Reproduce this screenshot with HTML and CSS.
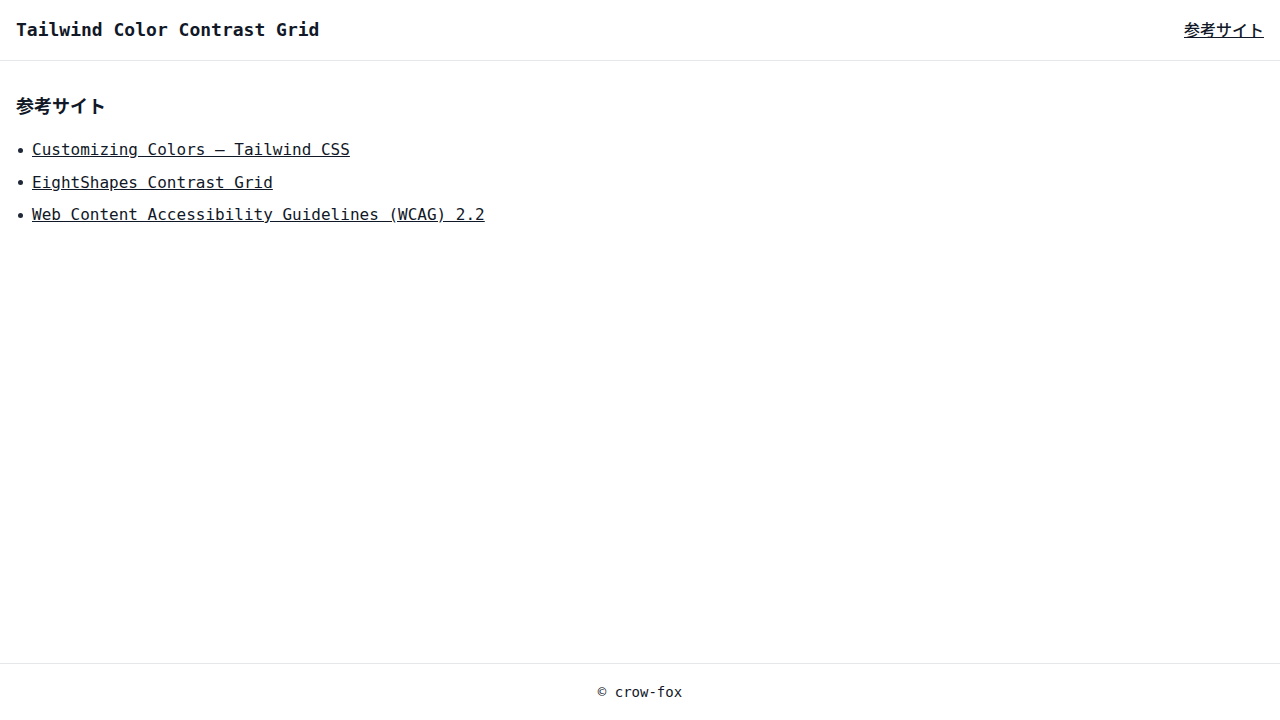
FILE: index.html
```html
<!DOCTYPE html>
<html lang="ja">
<head>
<meta charset="utf-8">
<title>Tailwind Color Contrast Grid</title>
<link rel="stylesheet" href="styles.css">
</head>
<body>
<header class="site-header">
  <h1 class="site-title">Tailwind Color Contrast Grid</h1>
  <a class="header-link" href="#refs">参考サイト</a>
</header>
<main class="main">
  <h2 class="section-title" id="refs">参考サイト</h2>
  <ul class="ref-list">
    <li class="ref-item"><a href="#">Customizing Colors – Tailwind CSS</a></li>
    <li class="ref-item"><a href="#">EightShapes Contrast Grid</a></li>
    <li class="ref-item"><a href="#">Web Content Accessibility Guidelines (WCAG) 2.2</a></li>
  </ul>
</main>
<footer class="site-footer">© crow-fox</footer>
</body>
</html>
```
FILE: styles.css
```css
* { box-sizing: border-box; }
html, body { margin: 0; padding: 0; }
body {
  font-family: "DejaVu Sans Mono", "Noto Sans CJK JP", monospace;
  color: #111827;
  background: #fff;
  min-height: 100vh;
  display: flex;
  flex-direction: column;
}
a { color: #111827; text-decoration: underline; }
.site-header {
  height: 61px;
  padding: 0 16px;
  border-bottom: 1px solid #e5e7eb;
  display: flex;
  align-items: center;
  justify-content: space-between;
}
.site-title {
  margin: 0;
  font-size: 18px;
  line-height: 28px;
  font-weight: 700;
}
.header-link {
  font-size: 16px;
  line-height: 24px;
  font-weight: 500;
  margin-top: 2px;
}
.main {
  flex: 1;
  padding: 30px 16px 16px;
}
.section-title {
  margin: 0 0 19px;
  font-size: 18px;
  line-height: 28px;
  font-weight: 700;
  font-family: "Noto Sans CJK JP", sans-serif;
}
.ref-list {
  margin: 0;
  padding: 0;
  list-style: none;
  display: flex;
  flex-direction: column;
  gap: 8.5px;
}
.ref-item {
  font-size: 16px;
  line-height: 24px;
  display: flex;
  align-items: center;
  gap: 9px;
}
.ref-item::before {
  content: "";
  width: 5px;
  height: 5px;
  margin-left: 2px;
  border-radius: 50%;
  background: #1f2937;
  flex: none;
}
.site-footer {
  border-top: 1px solid #e5e7eb;
  padding: 16px;
  font-size: 14px;
  line-height: 24px;
  text-align: center;
}
```
